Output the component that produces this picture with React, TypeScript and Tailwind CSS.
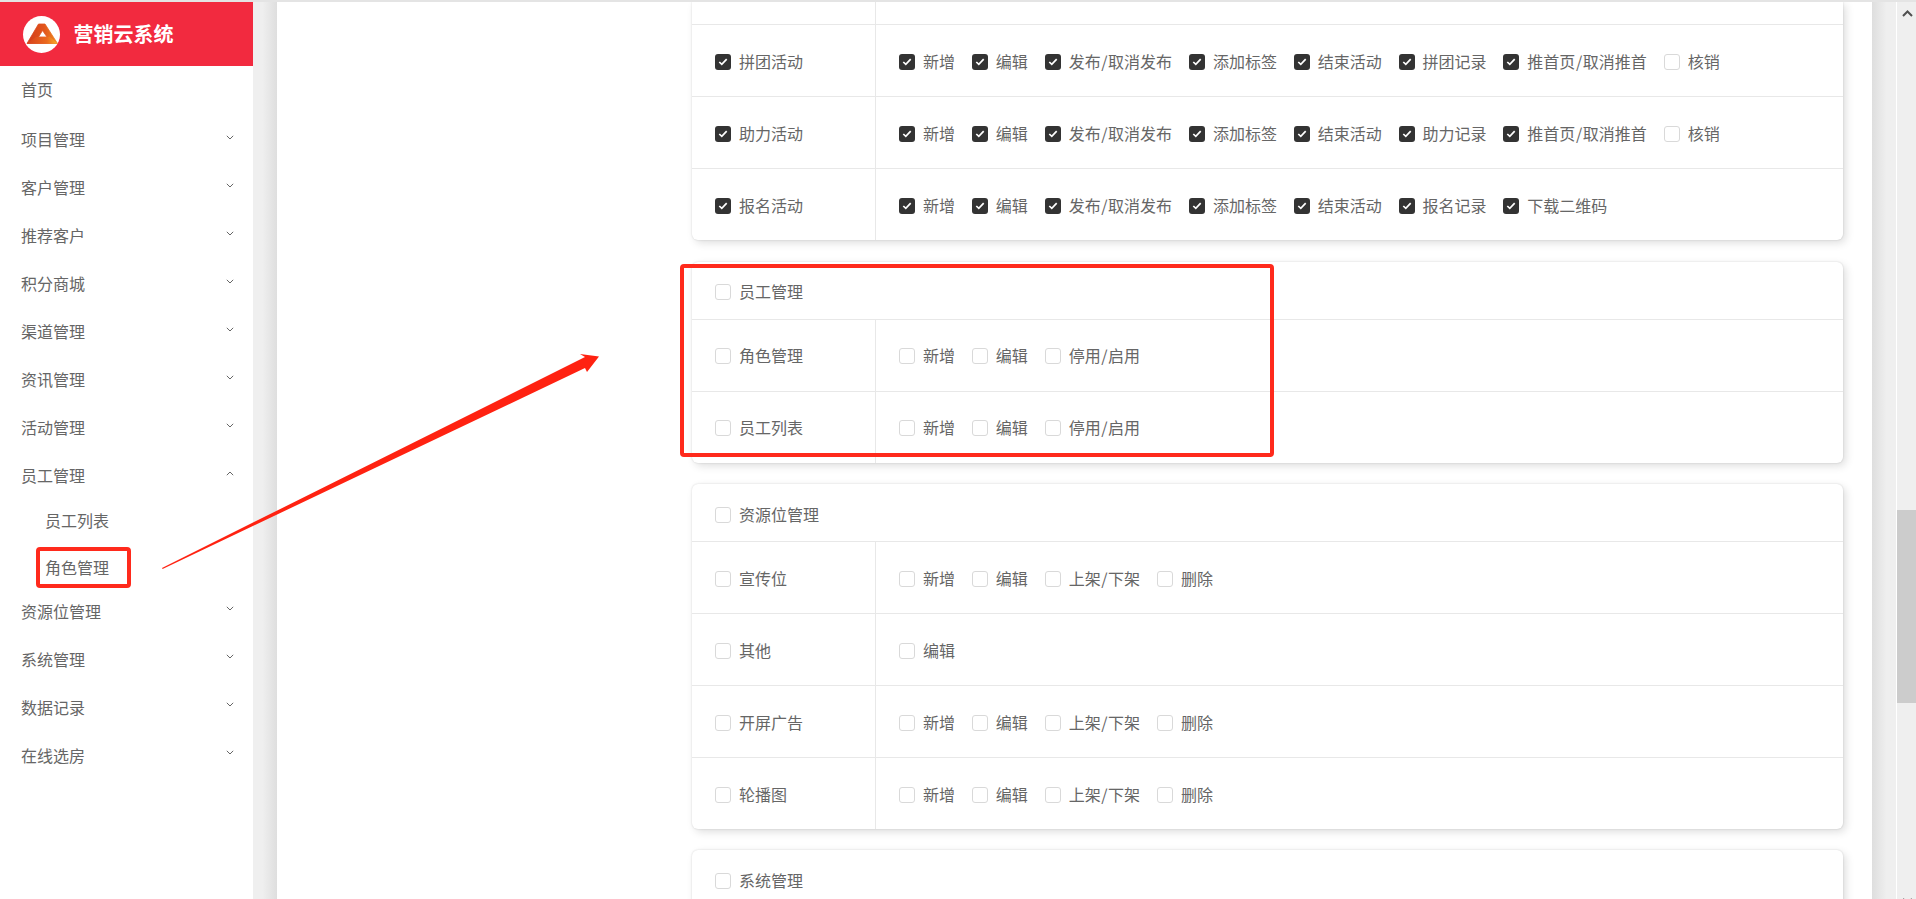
type Perm = { label: string; on?: boolean };

type PermRow = { name: string; on?: boolean; perms: Perm[] };

const menuAbove = ["项目管理", "客户管理", "推荐客户", "积分商城", "渠道管理", "资讯管理", "活动管理"];
const menuBelow = ["资源位管理", "系统管理", "数据记录", "在线选房"];

const addEditToggle = (names: string[], on = false): Perm[] => names.map((label) => ({ label, on }));

const activity = (name: string, record: string, extra: Perm[]): PermRow => ({
  name,
  on: true,
  perms: [
    ...addEditToggle(["新增", "编辑", "发布/取消发布", "添加标签", "结束活动", record], true),
    ...extra,
  ],
});

const activityRows: PermRow[] = [
  activity("拼团活动", "拼团记录", [{ label: "推首页/取消推首", on: true }, { label: "核销" }]),
  activity("助力活动", "助力记录", [{ label: "推首页/取消推首", on: true }, { label: "核销" }]),
  activity("报名活动", "报名记录", [{ label: "下载二维码", on: true }]),
];

const staffRows: PermRow[] = [
  { name: "角色管理", perms: addEditToggle(["新增", "编辑", "停用/启用"]) },
  { name: "员工列表", perms: addEditToggle(["新增", "编辑", "停用/启用"]) },
];

const shelf = addEditToggle(["新增", "编辑", "上架/下架", "删除"]);

const resourceRows: PermRow[] = [
  { name: "宣传位", perms: shelf },
  { name: "其他", perms: addEditToggle(["编辑"]) },
  { name: "开屏广告", perms: shelf },
  { name: "轮播图", perms: shelf },
];

function Chevron({ up = false }: { up?: boolean }) {
  return (
    <svg width="8" height="5" viewBox="0 0 8 5" fill="none" className="mb-[6px] mr-[19px] shrink-0 text-[#666]">
      <path d={up ? "M.8 4.2 4 1l3.2 3.2" : "M.8.8 4 4 7.2.8"} stroke="currentColor" strokeWidth="1" />
    </svg>
  );
}

function MenuItem({ label, up, textClass = "" }: { label: string; up?: boolean; textClass?: string }) {
  return (
    <div className="flex h-12 items-center justify-between pl-[21px]">
      <span className={textClass}>{label}</span>
      <Chevron up={up} />
    </div>
  );
}

function Logo() {
  return (
    <div className="flex h-[37px] w-[37px] items-center justify-center rounded-full bg-white">
      <svg width="37" height="37" viewBox="0 0 37 37">
        <defs>
          <linearGradient id="logoBody" x1="0" x2="1" y1="0" y2="0">
            <stop offset="0" stopColor="#d23c1a" />
            <stop offset="0.55" stopColor="#e2541c" />
            <stop offset="1" stopColor="#ee8a20" />
          </linearGradient>
          <linearGradient id="logoBottom" x1="0" x2="1" y1="0" y2="0">
            <stop offset="0" stopColor="#d8401c" />
            <stop offset="0.65" stopColor="#ea6a1e" />
            <stop offset="1" stopColor="#f7b02a" />
          </linearGradient>
        </defs>
        <path
          d="M15.5 8h6.5L34.5 27.5H4zM19.5 14.5 15.5 21h8.5z"
          fill="url(#logoBody)"
          fillRule="evenodd"
          stroke="url(#logoBody)"
          strokeWidth="0.8"
          strokeLinejoin="round"
        />
        <path d="M13 21h11.5l2-0.5L34.5 27.5H4.2z" fill="url(#logoBottom)" />
      </svg>
    </div>
  );
}

function Sidebar() {
  return (
    <aside className="w-[253px] shrink-0 bg-white text-[#666]">
      <div className="flex h-16 items-center bg-[#f22a3f] pl-[22.5px] text-white">
        <Logo />
        <span className="ml-[14px] text-[20px] font-bold">营销云系统</span>
      </div>
      <div className="flex h-12 items-center pl-[21px]">
        <span className="-translate-y-px">首页</span>
      </div>
      <div className="mt-[2px]">
        {menuAbove.map((label) => (
          <MenuItem key={label} label={label} textClass="-translate-y-px" />
        ))}
        <MenuItem label="员工管理" up textClass="-translate-y-px" />
        <div className="flex h-10 items-center pl-[45px]">员工列表</div>
        <div className="mt-[7px] flex h-10 items-center pl-[45px]">角色管理</div>
        {menuBelow.map((label) => (
          <MenuItem key={label} label={label} />
        ))}
      </div>
    </aside>
  );
}

function Checkbox({ on = false }: { on?: boolean }) {
  if (!on) {
    return <span className="h-4 w-4 shrink-0 rounded-[3px] border border-[#d9d9d9] bg-white" />;
  }
  return (
    <span className="flex h-4 w-4 shrink-0 items-center justify-center rounded-[3px] bg-[#333]">
      <svg width="10" height="8" viewBox="0 0 10 8" fill="none">
        <path d="M1.3 4 3.8 6.4 8.7 1.2" stroke="#fff" strokeWidth="1.7" />
      </svg>
    </span>
  );
}

function Label({ text }: { text: string }) {
  const [before, after] = text.split("/");
  if (after === undefined) return <span className="-translate-y-px">{text}</span>;
  return (
    <span className="-translate-y-px">
      {before}
      <span className="mx-[0.6px]">/</span>
      {after}
    </span>
  );
}

function Check({ label, on }: Perm) {
  return (
    <label className="flex items-center gap-2 whitespace-nowrap">
      <Checkbox on={on} />
      <Label text={label} />
    </label>
  );
}

function Row({ row, last, pad }: { row: PermRow; last: boolean; pad: string }) {
  return (
    <div className={`flex ${last ? "h-[71px]" : "h-[72px] border-b border-[#e8e8e8]"}`}>
      <div className={`flex w-[184px] shrink-0 items-center border-r border-[#e8e8e8] pl-[23px] ${pad}`}>
        <Check label={row.name} on={row.on} />
      </div>
      <div className={`flex items-center gap-x-[16.8px] pl-[23px] ${pad}`}>
        {row.perms.map((perm) => (
          <Check key={perm.label} label={perm.label} on={perm.on} />
        ))}
      </div>
    </div>
  );
}

function Card({
  title,
  rows,
  pad = "pt-[3px]",
  headPad = "pt-[5px]",
  className = "",
}: {
  title?: string;
  rows: PermRow[];
  pad?: string;
  headPad?: string;
  className?: string;
}) {
  return (
    <section
      className={`rounded-[6px] bg-white shadow-[3px_3px_8px_rgba(0,0,0,0.13),0_0_2px_rgba(0,0,0,0.16)] ${className}`}
    >
      {title ? (
        <div className={`flex h-[58px] items-center border-b border-[#e8e8e8] pl-[23px] ${headPad}`}>
          <Check label={title} />
        </div>
      ) : null}
      {rows.map((row, i) => (
        <Row key={row.name} row={row} last={i === rows.length - 1} pad={pad} />
      ))}
    </section>
  );
}

function Scrollbar() {
  return (
    <div className="relative w-[19px] shrink-0 overflow-hidden bg-[#efefef]">
      <svg width="11" height="7" viewBox="0 0 11 7" fill="none" className="absolute left-[5px] top-[8px]">
        <path d="M1 6l4.5-4.5L10 6" stroke="#505050" strokeWidth="2" />
      </svg>
      <div className="absolute left-0 top-[508px] h-[193px] w-full bg-[#cccccc]" />
      <svg width="11" height="7" viewBox="0 0 11 7" fill="none" className="absolute bottom-[-6px] left-[5px]">
        <path d="M1 1l4.5 4.5L10 1" stroke="#505050" strokeWidth="2" />
      </svg>
    </div>
  );
}

export default function App() {
  return (
    <div
      className="relative flex h-[899px] w-[1916px] flex-col overflow-hidden bg-white text-[16px] text-[#666]"
      style={{ fontFamily: '"Noto Sans CJK SC", "Liberation Sans", sans-serif' }}
    >
      <div className="h-[2px] shrink-0 bg-[#e4e4e4]" />
      <div className="flex min-h-0 flex-1">
        <Sidebar />
        <div className="w-6 shrink-0 bg-gradient-to-r from-[#efefef] from-40% to-[#dedede]" />
        <main className="min-w-0 flex-1 overflow-hidden pl-[415px] pr-[29px]">
          <div className="flex flex-col gap-[21px]">
            <div className="mb-px rounded-b-[6px] shadow-[3px_3px_8px_rgba(0,0,0,0.13),0_0_2px_rgba(0,0,0,0.16)]">
              <div className="flex h-[23px] border-b border-[#e8e8e8]">
                <div className="w-[184px] border-r border-[#e8e8e8]" />
              </div>
              {activityRows.map((row, i) => (
                <Row key={row.name} row={row} last={i === activityRows.length - 1} pad="pt-[3px]" />
              ))}
            </div>
            <Card title="员工管理" rows={staffRows} pad="pt-[1px]" headPad="pt-[3px]" />
            <Card title="资源位管理" rows={resourceRows} />
            <Card title="系统管理" rows={[]} className="h-[200px]" />
          </div>
        </main>
        <div className="w-6 shrink-0 bg-gradient-to-r from-[#dedede] to-[#efefef] to-60%" />
        <div className="w-px shrink-0 bg-white" />
        <Scrollbar />
      </div>

      {/* annotations drawn over the screenshot */}
      <div className="absolute left-[36px] top-[547px] h-[41px] w-[95px] rounded-[4px] border-4 border-[#ff2a1c]" />
      <div className="absolute left-[680px] top-[264px] h-[193px] w-[594px] rounded-[4px] border-4 border-[#ff2a1c]" />
      <svg width="1916" height="899" className="pointer-events-none absolute left-0 top-0">
        <polygon points="162,568 162.6,569 585,368 587,372 599,356.6 580,354 585,357" fill="#ff2211" />
      </svg>
    </div>
  );
}
